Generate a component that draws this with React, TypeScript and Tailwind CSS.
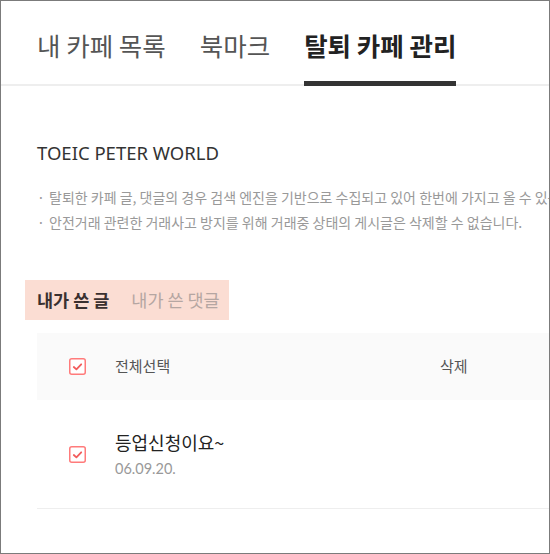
import React from "react";

const KR = { fontFamily: '"Noto Sans CJK KR", "Noto Sans", sans-serif' };

function Check() {
  return (
    <svg width="17" height="17" viewBox="0 0 17 17" className="block flex-none">
      <rect x="0.75" y="0.75" width="15.5" height="15.5" rx="2" fill="#fff" stroke="#ff7b7b" strokeWidth="1.5" />
      <polyline points="4.8,9 7.4,11.3 12.2,6.3" fill="none" stroke="#f25c5c" strokeWidth="1.8" strokeLinecap="round" strokeLinejoin="round" />
    </svg>
  );
}

const TABS = [
  { label: "내 카페 목록", active: false },
  { label: "북마크", active: false },
  { label: "탈퇴 카페 관리", active: true },
];

const NOTES = [
  "탈퇴한 카페 글, 댓글의 경우 검색 엔진을 기반으로 수집되고 있어 한번에 가지고 올 수 있는 글의 수가 제한될 수 있습니다.",
  "안전거래 관련한 거래사고 방지를 위해 거래중 상태의 게시글은 삭제할 수 없습니다.",
];

export default function App() {
  return (
    <div className="h-[554px] w-[550px] overflow-hidden border border-[#7b7b7b] bg-white" style={KR}>
      {/* top tabs */}
      <div className="flex h-[85px] items-end gap-[34px] border-b-2 border-[#eeeeee] pl-[36px]">
        {TABS.map((t) => (
          <div
            key={t.label}
            className={`-mb-[2px] whitespace-nowrap border-b-[5px] pb-[20px] text-[25.5px] leading-[32px] ${
              t.active ? "border-[#333333] font-bold text-[#222222]" : "border-transparent text-[#555555]"
            }`}
          >
            {t.label}
          </div>
        ))}
      </div>

      {/* cafe info */}
      <div className="pl-[36px] pt-[54px]">
        <h2 className="text-[18.5px] leading-[26px] text-[#333333]" style={{ fontFamily: '"Noto Sans", sans-serif' }}>
          TOEIC PETER WORLD
        </h2>
        <ul className="mt-[20px] grid gap-[3px] whitespace-nowrap text-[14px] leading-[22px] text-[#999999]">
          {NOTES.map((n) => (
            <li key={n} className="flex">
              <span className="w-[12px] flex-none">·</span>
              <span>{n}</span>
            </li>
          ))}
        </ul>
      </div>

      {/* sub tabs */}
      <div className="ml-[24px] mt-[47px] flex h-[40px] w-[204px] items-center gap-[22px] bg-[#fbddd3] px-[12px] text-[17.5px] whitespace-nowrap">
        <span className="font-bold text-[#3a3030]">내가 쓴 글</span>
        <span className="text-[#b5a6a2]">내가 쓴 댓글</span>
      </div>

      {/* table */}
      <div className="ml-[36px] mt-[13px]">
        <div className="flex h-[67px] items-center bg-[#fafafa] text-[15px] text-[#555555]">
          <div className="flex w-[78px] justify-center pl-[2px]">
            <Check />
          </div>
          <span className="w-[325px]">전체선택</span>
          <span>삭제</span>
        </div>
        <div className="flex h-[109px] items-center border-b border-[#eeeeee]">
          <div className="flex w-[78px] justify-center pl-[2px]">
            <Check />
          </div>
          <div>
            <p className="text-[18px] leading-[24px] text-[#222222]">등업신청이요~</p>
            <p className="mt-[6px] text-[14.5px] leading-[18px] text-[#999999]" style={{ fontFamily: "Lato, sans-serif" }}>
              06.09.20.
            </p>
          </div>
        </div>
      </div>
    </div>
  );
}
